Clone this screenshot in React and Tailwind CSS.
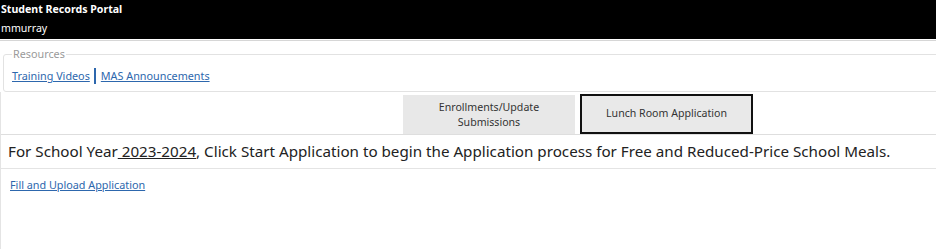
import React from 'react';

export default function App() {
  return (
    <div className="min-h-screen bg-white text-[#222] font-['Noto_Sans',sans-serif] overflow-hidden">
      {/* Header */}
      <header className="bg-black text-white h-[39px] px-[1px] text-[10.6px] leading-[19px]">
        <div className="font-bold">Student Records Portal</div>
        <div>mmurray</div>
      </header>

      <div className="border-t border-[#d6d6d6] mt-[1px]" />

      {/* Resources */}
      <fieldset className="ml-[3px] -mr-[10px] mt-[5px] border border-[#e2e2e2] rounded-[3px] px-[8px] pb-[7px] pt-0">
        <legend className="px-[1px] text-[10.8px] text-[#9a9a9a] leading-[16px]">Resources</legend>
        <div className="flex items-center text-[10.8px] leading-[16px] mt-[6px]">
          <a href="#" className="text-[#2d67ad] underline">Training Videos</a>
          <span className="ml-[4px] mr-[5px] w-[2px] h-[16px] bg-[#2d67ad]" />
          <a href="#" className="text-[#2d67ad] underline">MAS Announcements</a>
        </div>
      </fieldset>

      <div className="border-l border-[#e4e4e4]">
        {/* Tabs */}
        <div className="flex border-b border-[#dedede] pt-[2px] pl-[402px] gap-[5px] h-[43px]">
          <button className="w-[172px] h-[39px] mt-[1px] bg-[#e8e8e8] text-[10.6px] leading-[15px] text-[#333] flex items-center justify-center">
            <span>Enrollments/Update<br />Submissions</span>
          </button>
          <button className="w-[173px] h-[40px] bg-[#e9e9e9] border-2 border-[#111] text-[10.6px] text-[#333]">
            Lunch Room Application
          </button>
        </div>

        {/* Heading */}
        <div className="border-b border-[#e4e4e4] h-[34px] flex items-center px-[7px]">
          <h1 className="text-[15.2px] text-[#222] whitespace-nowrap">
            For School Year<span className="underline"> 2023-2024</span>, Click Start Application to begin the Application process for Free and Reduced-Price School Meals.
          </h1>
        </div>

        {/* Body */}
        <div className="px-[9px] pt-[8px] h-[82px] text-[10.8px] leading-[15px]">
          <a href="#" className="text-[#2d67ad] underline">Fill and Upload Application</a>
        </div>
      </div>
    </div>
  );
}
